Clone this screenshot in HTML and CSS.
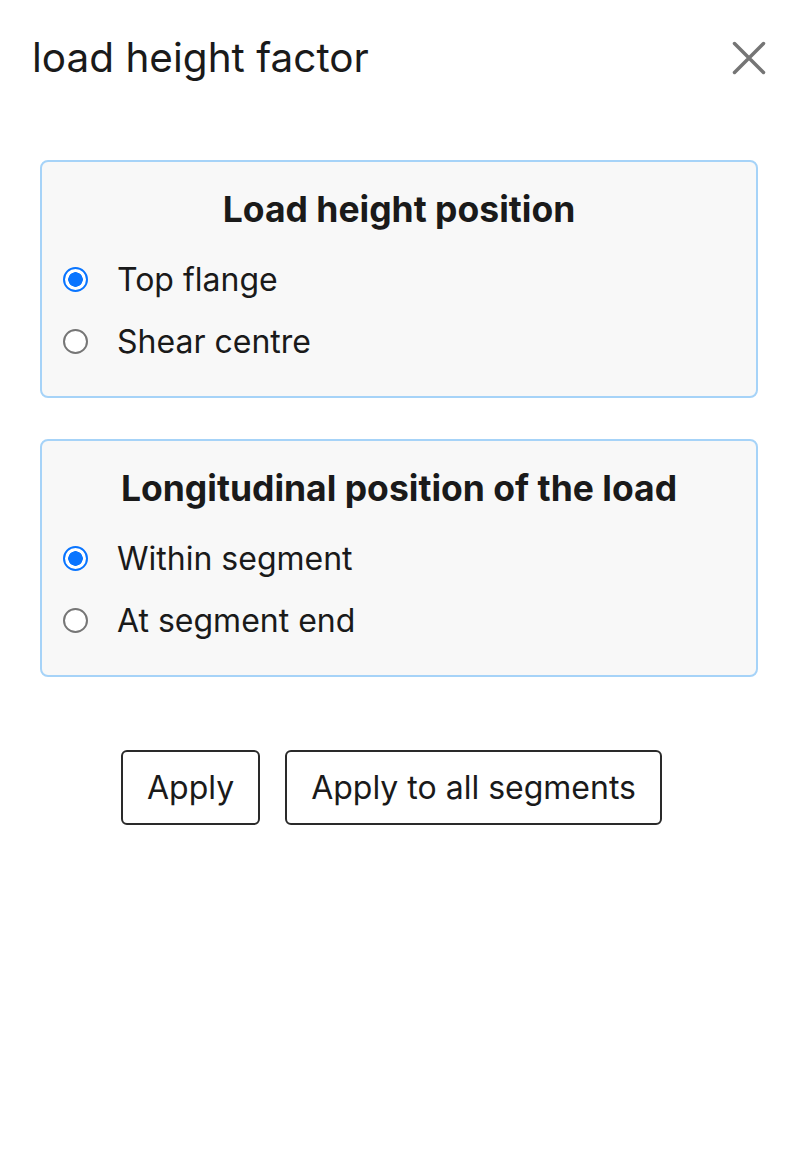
FILE: index.html
```
<!DOCTYPE html>
<html>
<head>
<meta charset="utf-8">
<link rel="stylesheet" href="styles.css">
</head>
<body>
<div class="dialog">
  <div class="header">
    <h1 class="title">load height factor</h1>
    <button class="close" aria-label="Close">
      <svg width="36" height="36" viewBox="0 0 36 36"><path d="M3.5 3.5 L32.5 32.5 M32.5 3.5 L3.5 32.5" stroke="#757575" stroke-width="3.5" stroke-linecap="round" fill="none"/></svg>
    </button>
  </div>
  <div class="panel">
    <div class="panel-title">Load height position</div>
    <label class="row"><span class="radio checked"></span><span class="label">Top flange</span></label>
    <label class="row"><span class="radio"></span><span class="label">Shear centre</span></label>
  </div>
  <div class="panel second">
    <div class="panel-title">Longitudinal position of the load</div>
    <label class="row"><span class="radio checked"></span><span class="label">Within segment</span></label>
    <label class="row"><span class="radio"></span><span class="label">At segment end</span></label>
  </div>
  <div class="actions">
    <button class="btn">Apply</button>
    <button class="btn">Apply to all segments</button>
  </div>
</div>
</body>
</html>
```
FILE: styles.css
```
html, body {
  margin: 0;
  padding: 0;
  background: #ffffff;
}
body {
  font-family: Inter, "Noto Sans", sans-serif;
  color: #1a1a1a;
}
.dialog {
  width: 792px;
}
.header {
  display: flex;
  align-items: center;
  justify-content: space-between;
  height: 116px;
  padding: 0 25px 0 32px;
  box-sizing: border-box;
}
.title {
  margin: 0;
  font-size: 40.5px;
  font-weight: 400;
  line-height: 48px;
}
.close {
  border: 0;
  background: transparent;
  padding: 0;
  width: 36px;
  height: 36px;
  display: flex;
  cursor: pointer;
}
.panel {
  margin: 44px 0 0 40px;
  width: 718px;
  box-sizing: border-box;
  border: 2px solid #a6d3f8;
  border-radius: 8px;
  background: #f8f8f8;
  padding: 27px 20px 24px 20px;
}
.panel.second {
  margin-top: 41px;
}
.panel-title {
  text-align: center;
  font-weight: 700;
  font-size: 35.5px;
  line-height: 42px;
  margin-bottom: 17px;
}
.row {
  display: flex;
  align-items: center;
  height: 62px;
}
.radio {
  width: 25px;
  height: 25px;
  box-sizing: border-box;
  border-radius: 50%;
  border: 2px solid #767676;
  background: #ffffff;
  margin-left: 1px;
  flex: none;
}
.radio.checked {
  border-color: #0a75ff;
  background: radial-gradient(circle, #0a75ff 0 7px, #ffffff 7.5px);
}
.label {
  font-size: 32px;
  margin-left: 29px;
}
.actions {
  display: flex;
  gap: 25px;
  padding-left: 121px;
  margin-top: 73px;
}
.btn {
  height: 75px;
  box-sizing: border-box;
  border: 2px solid #2a2a2a;
  border-radius: 6px;
  background: #ffffff;
  font-family: Inter, "Noto Sans", sans-serif;
  font-size: 32px;
  color: #1a1a1a;
  padding: 0 24px;
}
```
